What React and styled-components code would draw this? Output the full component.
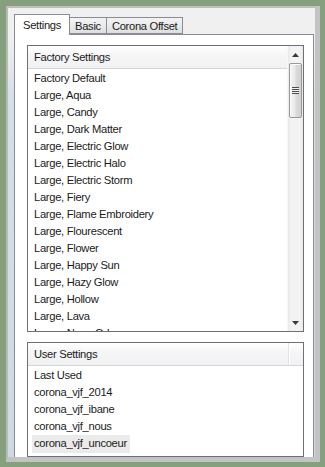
import React from 'react';
import styled, { createGlobalStyle } from 'styled-components';

const GlobalStyle = createGlobalStyle`
    html, body {
        margin: 0;
        padding: 0;
        background: #86a07e;
    }

    * {
        box-sizing: border-box;
    }
`;

const Frame = styled.div`
    width: 325px;
    height: 467px;
    padding: 6px 5px 5px 6px;
    background: #86a07e;
    font-family: "Liberation Sans", Arial, sans-serif;
    font-size: 11.2px;
    letter-spacing: -0.3px;
    color: #1b1b1b;
`;

const Window = styled.div`
    height: 456px;
    border-style: solid;
    border-width: 2px 5px 5px 2px;
    border-color: #bcc2bb #c3c3c3 #c3c3c3 #b4bcb3;
    padding: 6px 1px 0 6px;
    overflow: hidden;
    background: linear-gradient(to bottom, #f0f0f0 0, #f0f0f0 30px, #d4dfe8 90px, #cddae5 100%);
`;

const TabBar = styled.div`
    display: flex;
    align-items: flex-end;
    height: 20px;
    position: relative;
    z-index: 1;
`;

const Tab = styled.div`
    height: ${({ active }) => active ? '21px' : '17px'};
    margin-bottom: ${({ active }) => active ? '-1px' : '0'};
    padding: ${({ active }) => active ? '0 8px 0 8px' : '0 5px'};
    line-height: ${({ active }) => active ? '20px' : '17px'};
    border: 1px solid #898c95;
    border-bottom: ${({ active }) => active ? 'none' : '1px solid #898c95'};
    margin-right: -1px;
    background: ${({ active }) => active
        ? '#ffffff'
        : 'linear-gradient(to bottom, #f3f3f3 0%, #ebebeb 50%, #dedede 100%)'};
    white-space: nowrap;
`;

const Panel = styled.div`
    display: flex;
    flex-direction: column;
    gap: 10px;
    border: 1px solid #898c95;
    background: #ffffff;
    padding: 10px 9px 10px 12px;
`;

const ListBox = styled.div`
    display: flex;
    height: ${({ h }) => h}px;
    border: 1px solid #6f7073;
    background: #ffffff;
    overflow: hidden;
`;

const ListColumn = styled.div`
    flex: 1;
    display: flex;
    flex-direction: column;
    min-width: 0;
    overflow: hidden;
`;

const HeaderRow = styled.div`
    display: flex;
    flex: none;
    height: 23px;
    border-bottom: 1px solid #d5d5d5;
    background: linear-gradient(to bottom, #ffffff 0%, #f6f6f7 40%, #f0f1f2 100%);
`;

const HeaderCell = styled.div`
    flex: 1;
    padding-left: 6px;
    line-height: 22px;
`;

const HeaderBlank = styled.div`
    width: 15px;
    border-left: 1px solid #e3e3e3;
    box-shadow: inset 1px 0 0 #ffffff;
`;

const Items = styled.div`
    padding-top: 1px;
`;

const Item = styled.div`
    height: 17px;
    line-height: 17px;
    padding-left: 4px;
    white-space: nowrap;
`;

const Label = styled.span`
    display: inline-block;
    padding: 0 3px 0 2px;
    height: 18px;
    background: ${({ selected }) => selected ? '#ebebeb' : 'transparent'};
`;

const ScrollBar = styled.div`
    width: 16px;
    flex: none;
    display: flex;
    flex-direction: column;
    background: linear-gradient(to right, #e9e9e9 0, #f3f3f3 3px, #f3f3f3 12px, #e9e9e9 100%);
    border-left: 1px solid #f7f7f7;
`;

const ArrowButton = styled.div`
    height: 17px;
    flex: none;
    display: flex;
    align-items: center;
    justify-content: center;
`;

const Track = styled.div`
    flex: 1;
    padding: 0 1px;
`;

const Thumb = styled.div`
    height: 55px;
    border: 1px solid #989898;
    border-radius: 2px;
    background: linear-gradient(to right, #f4f4f4 0%, #e9e9e9 45%, #dadada 55%, #d2d2d2 100%);
    box-shadow: inset 1px 1px 0 #fbfbfb;
    display: flex;
    align-items: center;
    justify-content: center;
`;

const Grip = styled.div`
    width: 7px;
    height: 7px;
    background: repeating-linear-gradient(to bottom, #4d4d4d 0, #4d4d4d 1px, #f0f0f0 1px, #f0f0f0 2px);
`;

const Arrow = ({ down }) => (
    <svg width="7" height="4" viewBox="0 0 7 4">
        <polygon points={down ? '0,0 7,0 3.5,4' : '0,4 7,4 3.5,0'} fill="#3a3a3a" />
    </svg>
);

const factory = [
    'Factory Default',
    'Large, Aqua',
    'Large, Candy',
    'Large, Dark Matter',
    'Large, Electric Glow',
    'Large, Electric Halo',
    'Large, Electric Storm',
    'Large, Fiery',
    'Large, Flame Embroidery',
    'Large, Flourescent',
    'Large, Flower',
    'Large, Happy Sun',
    'Large, Hazy Glow',
    'Large, Hollow',
    'Large, Lava',
    'Large, Neon Orb',
];

const user = [
    'Last Used',
    'corona_vjf_2014',
    'corona_vjf_ibane',
    'corona_vjf_nous',
    'corona_vjf_uncoeur',
];

export default function App() {
    const tabs = ['Settings', 'Basic', 'Corona Offset'];

    return (
        <Frame>
            <GlobalStyle />
            <Window>
                <TabBar>
                    {tabs.map((t, i) => <Tab key={t} active={i === 0}>{t}</Tab>)}
                </TabBar>
                <Panel>
                    <ListBox h={287}>
                        <ListColumn>
                            <HeaderRow>
                                <HeaderCell>Factory Settings</HeaderCell>
                            </HeaderRow>
                            <Items>
                                {factory.map(name => <Item key={name}><Label>{name}</Label></Item>)}
                            </Items>
                        </ListColumn>
                        <ScrollBar>
                            <ArrowButton><Arrow /></ArrowButton>
                            <Track><Thumb><Grip /></Thumb></Track>
                            <ArrowButton><Arrow down /></ArrowButton>
                        </ScrollBar>
                    </ListBox>
                    <ListBox h={115}>
                        <ListColumn>
                            <HeaderRow>
                                <HeaderCell>User Settings</HeaderCell>
                                <HeaderBlank />
                            </HeaderRow>
                            <Items>
                                {user.map((name, i) => (
                                    <Item key={name}>
                                        <Label selected={i === user.length - 1}>{name}</Label>
                                    </Item>
                                ))}
                            </Items>
                        </ListColumn>
                    </ListBox>
                </Panel>
            </Window>
        </Frame>
    );
}
